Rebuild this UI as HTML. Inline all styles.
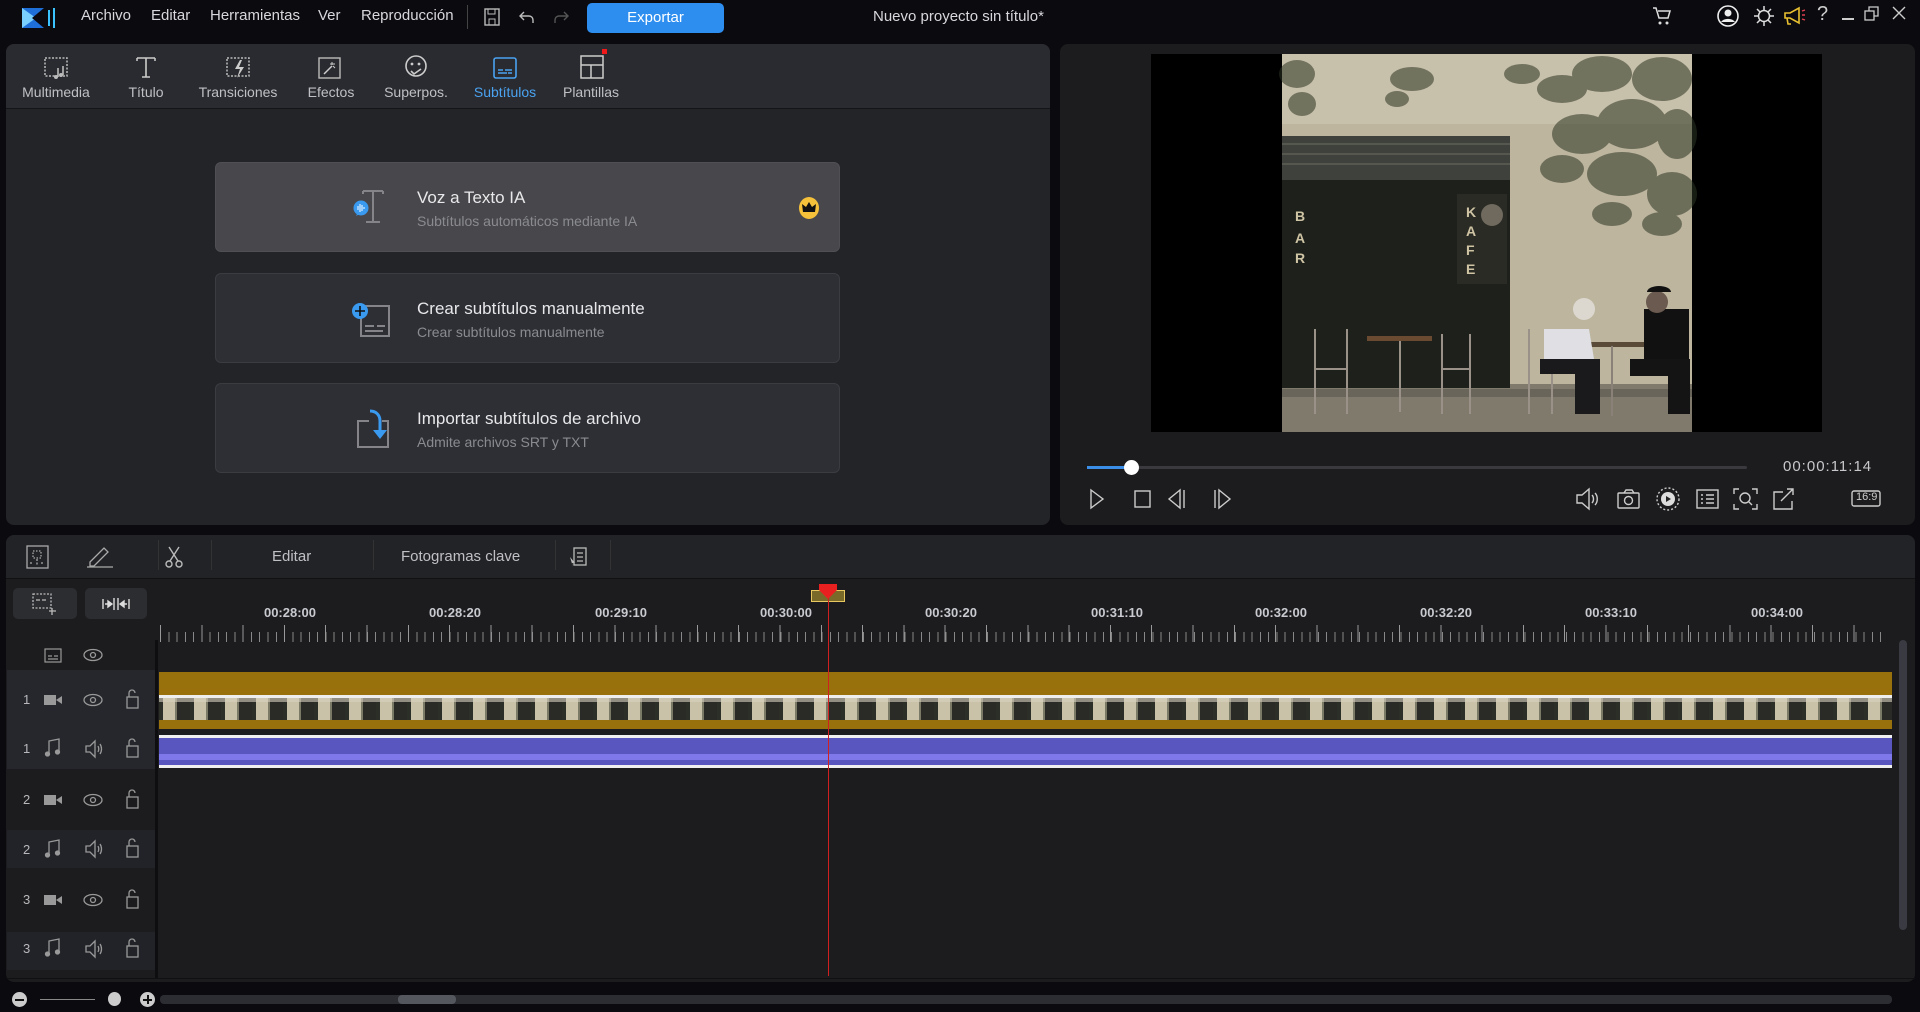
<!DOCTYPE html>
<html><head><meta charset="utf-8">
<style>
*{margin:0;padding:0;box-sizing:border-box}
body{width:1920px;height:1012px;background:#0b0a0f;font-family:"Liberation Sans",sans-serif;color:#d0d0d4;position:relative;overflow:hidden}
.a{position:absolute}
.menu{font-size:15px;color:#d8d8dc;top:7px}
.tb{font-size:14px;color:#bfc0c4;text-align:center;width:80px}
.card{position:absolute;left:215px;width:625px;height:90px;border-radius:6px;background:#2d2f35;border:1px solid #3a3c42}
.card .t{position:absolute;left:201px;top:25px;font-size:17px;color:#e8e8ea}
.card .s{position:absolute;left:201px;top:50px;font-size:14px;color:#8a8b90}
.lbl{position:absolute;top:605px;font-size:13px;font-weight:bold;color:#c8cad0;width:80px;text-align:center}
.num{position:absolute;left:23px;font-size:13px;color:#b8b8bc}
svg{position:absolute;overflow:visible}
</style></head><body>

<svg style="left:22px;top:6px" width="38" height="24" viewBox="0 0 38 24"><path d="M0 2h22v20H0z" fill="#1e6fd8"/><path d="M0 2l14 10L0 22z" fill="#7ad0ff"/><path d="M22 2L10 12l12 10z" fill="#0b0a0f"/><rect x="26" y="4" width="2" height="16" fill="#3bc3ff"/><rect x="31" y="2" width="2" height="20" fill="#3bc3ff"/></svg>
<div class="a menu" style="left:81px">Archivo</div>
<div class="a menu" style="left:151px">Editar</div>
<div class="a menu" style="left:210px">Herramientas</div>
<div class="a menu" style="left:318px">Ver</div>
<div class="a menu" style="left:361px">Reproducción</div>
<div class="a" style="left:467px;top:5px;width:1px;height:24px;background:#444"></div>
<svg style="left:484px;top:8px" width="16" height="18"><rect x="1" y="1" width="14" height="16" fill="none" stroke="#bbb" stroke-width="1.4"/><rect x="4" y="1" width="7" height="5" fill="none" stroke="#bbb"/><rect x="5" y="11" width="6" height="6" fill="none" stroke="#bbb"/></svg>
<svg style="left:518px;top:10px" width="18" height="14"><path d="M6 2L2 6l4 4M2 6h9a4 4 0 0 1 4 4v3" fill="none" stroke="#bbb" stroke-width="1.4"/></svg>
<svg style="left:552px;top:10px" width="18" height="14"><path d="M12 2l4 4-4 4M16 6H7a4 4 0 0 0-4 4v3" fill="none" stroke="#555" stroke-width="1.4"/></svg>
<div class="a" style="left:587px;top:3px;width:137px;height:30px;background:#2e8ef0;border-radius:5px;color:#fff;font-size:15px;text-align:center;line-height:30px">Exportar</div>
<div class="a" style="left:873px;top:8px;font-size:15px;color:#d8d8dc">Nuevo proyecto sin título*</div>
<svg style="left:1652px;top:6px" width="20" height="20"><path d="M1 2h3l3 10h9l2-7H6" fill="none" stroke="#ddd" stroke-width="1.5"/><circle cx="8" cy="17" r="1.5" fill="#ddd"/><circle cx="15" cy="17" r="1.5" fill="#ddd"/></svg>
<svg style="left:1717px;top:5px" width="22" height="22"><circle cx="11" cy="11" r="10" fill="none" stroke="#eee" stroke-width="1.6"/><circle cx="11" cy="8" r="3.5" fill="#eee"/><path d="M4 17a8 6 0 0 1 14 0z" fill="#eee"/></svg>
<svg style="left:1753px;top:5px" width="22" height="22"><circle cx="11" cy="11" r="5.5" fill="none" stroke="#ddd" stroke-width="1.5"/><path d="M11 1v4M11 17v4M1 11h4M17 11h4M4 4l3 3M15 15l3 3M4 18l3-3M15 7l3-3" stroke="#ddd" stroke-width="1.5"/></svg>
<svg style="left:1783px;top:6px" width="24" height="20"><path d="M2 7h5l9-5v15l-9-5H2z" fill="none" stroke="#e8c030" stroke-width="1.6"/><path d="M4 12l1 6h3" fill="none" stroke="#e8c030" stroke-width="1.6"/><path d="M19 5l3-1M19 9h3M19 13l3 1" stroke="#e04050" stroke-width="1.4"/></svg>
<div class="a" style="left:1817px;top:3px;font-size:20px;color:#ccc">?</div>
<div class="a" style="left:1842px;top:18px;width:12px;height:1.5px;background:#ccc"></div>
<svg style="left:1864px;top:6px" width="16" height="16"><rect x="1" y="5" width="9" height="9" fill="none" stroke="#ccc" stroke-width="1.3"/><path d="M5 5V1h9v9h-4" fill="none" stroke="#ccc" stroke-width="1.3"/></svg>
<svg style="left:1892px;top:6px" width="14" height="14"><path d="M1 1l12 12M13 1L1 13" stroke="#ccc" stroke-width="1.4"/></svg>

<div class="a" style="left:6px;top:44px;width:1044px;height:481px;background:#232428;border-radius:8px;overflow:hidden">
 <div class="a" style="left:0;top:0;width:1044px;height:65px;background:#2a2b30;border-bottom:1px solid #151518"></div>
</div>
<svg style="left:44px;top:56px" width="26" height="24"><rect x="1" y="2" width="22" height="18" fill="none" stroke="#bbb" stroke-width="1.5" stroke-dasharray="2 1.5"/><path d="M14 12v9" stroke="#bbb" stroke-width="1.6"/><circle cx="12" cy="21" r="2" fill="#bbb"/><path d="M19 10v9" stroke="#bbb" stroke-width="1.6"/><circle cx="17" cy="19" r="2" fill="#bbb"/></svg>
<svg style="left:135px;top:56px" width="22" height="22"><path d="M2 2h18M11 2v19M7 21h8" stroke="#ccc" stroke-width="1.6" fill="none"/><path d="M2 2v3M20 2v3" stroke="#ccc" stroke-width="1.5"/></svg>
<svg style="left:226px;top:56px" width="26" height="24"><rect x="1" y="2" width="22" height="18" fill="none" stroke="#bbb" stroke-width="1.5" stroke-dasharray="2 1.5"/><path d="M14 4l-5 9h5l-3 9 7-11h-5l3-7z" fill="#ccc"/></svg>
<svg style="left:318px;top:56px" width="24" height="24"><rect x="1" y="2" width="21" height="20" fill="none" stroke="#bbb" stroke-width="1.4"/><path d="M6 18l8-8" stroke="#ccc" stroke-width="1.5"/><path d="M14 6v3M12 8h5M15 10l2 2" stroke="#ccc" stroke-width="1"/></svg>
<svg style="left:404px;top:55px" width="24" height="26"><circle cx="12" cy="11" r="10" fill="none" stroke="#ccc" stroke-width="1.6"/><circle cx="8" cy="9" r="1.4" fill="#ccc"/><circle cx="15" cy="9" r="1.4" fill="#ccc"/><path d="M7 16l3 3 7-5" stroke="#ccc" stroke-width="1.6" fill="none"/></svg>
<svg style="left:493px;top:57px" width="24" height="22"><rect x="1" y="1" width="22" height="20" rx="2" fill="none" stroke="#4aa2f0" stroke-width="1.6"/><path d="M5 13h5M12 13h7M5 16h9M15 16h4" stroke="#4aa2f0" stroke-width="1.5"/></svg>
<svg style="left:580px;top:55px" width="24" height="24"><rect x="1" y="1" width="22" height="22" fill="none" stroke="#ccc" stroke-width="1.5"/><path d="M1 10h22M11 10v13" stroke="#ccc" stroke-width="1.5"/></svg>
<div class="a" style="left:602px;top:49px;width:5px;height:5px;background:#f01818"></div>
<div class="a tb" style="left:16px;top:84px">Multimedia</div>
<div class="a tb" style="left:106px;top:84px">Título</div>
<div class="a tb" style="left:198px;top:84px">Transiciones</div>
<div class="a tb" style="left:291px;top:84px">Efectos</div>
<div class="a tb" style="left:376px;top:84px">Superpos.</div>
<div class="a tb" style="left:465px;top:84px;color:#4aa2f0">Subtítulos</div>
<div class="a tb" style="left:551px;top:84px">Plantillas</div>

<div class="card" style="top:162px;background:#48484c;border-color:#505054">
 <svg style="left:137px;top:26px" width="40" height="36"><path d="M10 2h20M20 2v31M13 33h14M10 2v3M30 2v3" stroke="#858589" stroke-width="2" fill="none"/><circle cx="8" cy="19" r="7.5" fill="#3a9af0"/><path d="M3 27l2-4 3 1z" fill="#3a9af0"/><path d="M5 17v4M7 15v8M9 16v6M11 18v2" stroke="#fff" stroke-width="1"/></svg>
 <div class="t">Voz a Texto IA</div><div class="s">Subtítulos automáticos mediante IA</div>
 <svg style="left:582px;top:33px" width="22" height="24"><ellipse cx="11" cy="12" rx="10" ry="11" fill="#f5c13a"/><path d="M5 16l-1-8 4 3 3-5 3 5 4-3-1 8z" fill="#111"/></svg>
</div>
<div class="card" style="top:273px">
 <svg style="left:135px;top:27px" width="40" height="38"><rect x="10" y="5" width="28" height="30" fill="none" stroke="#858589" stroke-width="2"/><path d="M14 25h9M26 25h8M14 30h18" stroke="#858589" stroke-width="2"/><circle cx="9" cy="10" r="8" fill="#3a9af0"/><path d="M9 5v10M4 10h10" stroke="#111" stroke-width="1.6"/></svg>
 <div class="t">Crear subtítulos manualmente</div><div class="s">Crear subtítulos manualmente</div>
</div>
<div class="card" style="top:383px">
 <svg style="left:140px;top:24px" width="40" height="40"><path d="M13 13H2v26h30V13h-6" stroke="#858589" stroke-width="2" fill="none"/><path d="M14 3c6 0 10 4 10 10v12" stroke="#3a9af0" stroke-width="3" fill="none"/><path d="M17 22l7 9 7-9z" fill="#3a9af0"/></svg>
 <div class="t">Importar subtítulos de archivo</div><div class="s">Admite archivos SRT y TXT</div>
</div>

<div class="a" style="left:1060px;top:44px;width:855px;height:481px;background:#1c1c1e;border-radius:8px"></div>
<div class="a" style="left:1151px;top:54px;width:671px;height:378px;background:#000"></div>
<svg style="left:1282px;top:54px" width="410" height="378" viewBox="0 0 410 378">
 <rect width="410" height="378" fill="#bdb59e"/>
 <rect y="0" width="410" height="70" fill="#c7c0aa"/>
 <rect y="330" width="410" height="48" fill="#807a6c"/>
 <rect y="335" width="410" height="8" fill="#6a655a"/>
 <rect x="0" y="82" width="228" height="44" fill="#3f413c"/>
 <path d="M0 90h228M0 100h228M0 110h228" stroke="#56584f" stroke-width="2"/>
 <rect x="0" y="126" width="228" height="208" fill="#1e201b"/>
 <rect x="175" y="140" width="50" height="90" fill="#2a2b25"/>
 <g fill="#cfc4a4" font-family="Liberation Sans" font-weight="bold" font-size="14"><text x="13" y="167">B</text><text x="13" y="189">A</text><text x="13" y="209">R</text><text x="184" y="163">K</text><text x="184" y="182">A</text><text x="184" y="201">F</text><text x="184" y="220">E</text></g>
 <circle cx="210" cy="161" r="11" fill="#706a5e"/>
 <g stroke="#9a9288" stroke-width="2" fill="none"><path d="M33 275v85M65 275v85M33 315h32M90 283h58M118 283v75M160 280v80M188 280v80M160 315h28M247 275v85M270 315v45"/></g>
 <rect x="85" y="282" width="65" height="5" fill="#6a4a30"/>
 <rect x="305" y="288" width="70" height="5" fill="#5a4a38"/>
 <path d="M330 292v70" stroke="#8a8278" stroke-width="2"/>
 <path d="M262 275h45l5 30h-50z" fill="#e0e0e4"/>
 <circle cx="302" cy="255" r="11" fill="#dcd8d0"/>
 <path d="M258 305h60v55h-25v-40h-35z" fill="#1a1a1c"/>
 <path d="M362 255h45v60h-45z" fill="#111"/>
 <circle cx="375" cy="248" r="11" fill="#6a5a50"/>
 <path d="M365 238a12 6 0 0 1 24 0z" fill="#111"/>
 <path d="M348 305h60v55h-22v-38h-38z" fill="#141414"/>
 <g fill="#2d3523" opacity=".55">
  <ellipse cx="15" cy="20" rx="18" ry="14"/><ellipse cx="20" cy="50" rx="14" ry="12"/><ellipse cx="130" cy="25" rx="22" ry="12"/><ellipse cx="115" cy="45" rx="12" ry="8"/>
  <ellipse cx="240" cy="20" rx="18" ry="10"/><ellipse cx="280" cy="35" rx="25" ry="14"/><ellipse cx="320" cy="20" rx="30" ry="18"/><ellipse cx="380" cy="25" rx="30" ry="22"/>
  <ellipse cx="300" cy="80" rx="30" ry="20"/><ellipse cx="350" cy="70" rx="35" ry="25"/><ellipse cx="395" cy="80" rx="20" ry="25"/>
  <ellipse cx="280" cy="115" rx="22" ry="14"/><ellipse cx="340" cy="120" rx="35" ry="22"/><ellipse cx="390" cy="140" rx="25" ry="22"/><ellipse cx="330" cy="160" rx="20" ry="12"/><ellipse cx="380" cy="170" rx="20" ry="12"/>
 </g>
</svg>
<div class="a" style="left:1087px;top:466px;width:660px;height:3px;background:#3a3a3e;border-radius:2px"></div>
<div class="a" style="left:1087px;top:466px;width:44px;height:3px;background:#3a8ee8"></div>
<div class="a" style="left:1124px;top:460px;width:15px;height:15px;border-radius:50%;background:#fff"></div>
<div class="a" style="left:1783px;top:458px;font-size:15px;color:#c8c8cc;letter-spacing:1px">00:00:11:14</div>
<svg style="left:1090px;top:488px" width="150" height="22" fill="none" stroke="#ccc" stroke-width="1.4">
 <path d="M1 2l12 9-12 9z"/><rect x="45" y="3" width="15" height="16"/><path d="M90 2L79 11l11 9zM94 2v18M125 2v18M129 2l11 9-11 9z"/></svg>
<svg style="left:1575px;top:486px" width="305" height="26" fill="none" stroke="#ccc" stroke-width="1.4">
 <path d="M2 9h5l7-6v20l-7-6H2zM17 9c2 2 2 6 0 8M20 7c3 3 3 9 0 12"/>
 <rect x="43" y="7" width="21" height="15" rx="1"/><path d="M49 7l2-3h6l2 3"/><circle cx="53.5" cy="14.5" r="4"/>
 <circle cx="93" cy="13" r="7" fill="#ddd" stroke="none"/><path d="M91 10l5 3-5 3z" fill="#222" stroke="none"/><circle cx="93" cy="13" r="11" stroke-dasharray="2 2"/>
 <rect x="122" y="4" width="21" height="18"/><path d="M126 9h2M131 9h8M126 13h2M131 13h8M126 17h2M131 17h8"/>
 <path d="M164 3h-5v5M177 3h5v5M164 23h-5v-5M177 23h5v-5"/><circle cx="170" cy="12" r="5"/><path d="M174 16l3 3"/>
 <path d="M208 6h-9v17h18v-8M206 15l12-12M212 3h6v6"/>
 <rect x="277" y="5" width="28" height="15" rx="2"/>
</svg>
<div class="a" style="left:1856px;top:491px;font-size:11px;color:#ccc">16:9</div>

<div class="a" style="left:6px;top:535px;width:1909px;height:447px;background:#1c1c1e;border-radius:8px"></div>
<div class="a" style="left:6px;top:535px;width:1909px;height:44px;background:#222326;border-radius:8px 8px 0 0;border-bottom:1px solid #111"></div>
<svg style="left:26px;top:545px" width="24" height="24" fill="none" stroke="#aaa" stroke-width="1.3"><rect x="1" y="1" width="21" height="22"/><rect x="7" y="6" width="8" height="7" stroke-dasharray="1.5 1.5"/><path d="M11 14v6M4 18h3M15 18h3" stroke-dasharray="2 1.5"/></svg>
<svg style="left:86px;top:546px" width="28" height="22" fill="none" stroke="#aaa" stroke-width="1.3"><path d="M4 16L18 2l4 4L8 20H4zM1 21h26"/></svg>
<svg style="left:165px;top:546px" width="18" height="22" fill="none" stroke="#bbb" stroke-width="1.4"><path d="M4 1l9 14M14 1L5 15"/><circle cx="4" cy="18" r="3"/><circle cx="14" cy="18" r="3"/></svg>
<div class="a" style="left:272px;top:548px;font-size:15px;color:#c0c0c4">Editar</div>
<div class="a" style="left:401px;top:548px;font-size:15px;color:#c0c0c4">Fotogramas clave</div>
<svg style="left:569px;top:547px" width="22" height="22" fill="none" stroke="#bbb" stroke-width="1.3"><rect x="5" y="1" width="12" height="17"/><path d="M8 6h6M8 10h6M8 14h6"/><path d="M1 10l5 6-3 0 1 4z" fill="#bbb" stroke="none"/></svg>
<div class="a" style="left:158px;top:540px;width:1px;height:30px;background:#333"></div>
<div class="a" style="left:211px;top:540px;width:1px;height:30px;background:#333"></div>
<div class="a" style="left:373px;top:540px;width:1px;height:30px;background:#333"></div>
<div class="a" style="left:555px;top:540px;width:1px;height:30px;background:#333"></div>
<div class="a" style="left:610px;top:540px;width:1px;height:30px;background:#333"></div>

<div class="a" style="left:13px;top:588px;width:64px;height:31px;background:#2c2d31;border-radius:5px"></div>
<div class="a" style="left:85px;top:588px;width:62px;height:31px;background:#2c2d31;border-radius:5px"></div>
<svg style="left:32px;top:593px" width="28" height="22" fill="none" stroke="#bbb" stroke-width="1.3"><rect x="1" y="1" width="18" height="14" stroke-dasharray="2 1.5"/><path d="M4 7h4M10 7h4M20 15v7M17 18h7"/></svg>
<svg style="left:102px;top:597px" width="28" height="14" stroke="#ddd" stroke-width="1.4" fill="#ddd"><path d="M1 2v10M27 2v10M12 1v12M16 1v12M3 7h7M18 7h7" fill="none"/><path d="M10 7l-4-3v6zM18 7l4-3v6z"/></svg>

<div class="a" style="left:7px;top:670px;width:149px;height:99px;background:#26272c"></div>
<div class="a" style="left:7px;top:830px;width:149px;height:38px;background:#222328"></div>
<div class="a" style="left:7px;top:932px;width:149px;height:38px;background:#222328"></div>
<div class="a" style="left:155px;top:640px;width:3px;height:338px;background:#0e0e10"></div>
<div class="a" style="left:7px;top:978px;width:1908px;height:1px;background:#101012"></div>

<svg style="left:44px;top:648px" width="18" height="15" fill="none" stroke="#999" stroke-width="1.2"><rect x="1" y="1" width="16" height="13"/><path d="M4 8h4M10 8h4M4 11h10"/></svg>
<div class="num" style="top:692px">1</div><div class="num" style="top:741px">1</div>
<div class="num" style="top:792px">2</div><div class="num" style="top:842px">2</div>
<div class="num" style="top:892px">3</div><div class="num" style="top:941px">3</div>

<svg style="left:0;top:0" width="160" height="980" fill="none" stroke="#999" stroke-width="1.3">
 <g><ellipse cx="93" cy="655" rx="9" ry="5.5"/><circle cx="93" cy="655" r="2.5"/></g>
 <g><ellipse cx="93" cy="700" rx="9" ry="5.5"/><circle cx="93" cy="700" r="2.5"/></g>
 <g><ellipse cx="93" cy="800" rx="9" ry="5.5"/><circle cx="93" cy="800" r="2.5"/></g>
 <g><ellipse cx="93" cy="900" rx="9" ry="5.5"/><circle cx="93" cy="900" r="2.5"/></g>
 <g fill="#999" stroke="none"><rect x="44" y="695" width="12" height="10"/><path d="M56 700l6-4v8z"/>
 <rect x="44" y="795" width="12" height="10"/><path d="M56 800l6-4v8z"/>
 <rect x="44" y="895" width="12" height="10"/><path d="M56 900l6-4v8z"/></g>
 <g><path d="M49 754v-13l10-2v13" /><circle cx="47.5" cy="754" r="2" fill="#999"/><circle cx="57.5" cy="752" r="2" fill="#999"/></g>
 <g><path d="M49 855v-13l10-2v13" /><circle cx="47.5" cy="855" r="2" fill="#999"/><circle cx="57.5" cy="853" r="2" fill="#999"/></g>
 <g><path d="M49 954v-13l10-2v13" /><circle cx="47.5" cy="954" r="2" fill="#999"/><circle cx="57.5" cy="952" r="2" fill="#999"/></g>
 <g><path d="M86 746h4l5-5v16l-5-5h-4zM98 746c1 2 1 4 0 6M100 744c2 3 2 7 0 10"/></g>
 <g><path d="M86 846h4l5-5v16l-5-5h-4zM98 846c1 2 1 4 0 6M100 844c2 3 2 7 0 10"/></g>
 <g><path d="M86 946h4l5-5v16l-5-5h-4zM98 946c1 2 1 4 0 6M100 944c2 3 2 7 0 10"/></g>
 <g><rect x="127" y="697" width="11" height="11"/><path d="M129 697v-4a3 3 0 0 1 6 0"/></g>
 <g><rect x="127" y="746" width="11" height="11"/><path d="M129 746v-4a3 3 0 0 1 6 0"/></g>
 <g><rect x="127" y="797" width="11" height="11"/><path d="M129 797v-4a3 3 0 0 1 6 0"/></g>
 <g><rect x="127" y="846" width="11" height="11"/><path d="M129 846v-4a3 3 0 0 1 6 0"/></g>
 <g><rect x="127" y="897" width="11" height="11"/><path d="M129 897v-4a3 3 0 0 1 6 0"/></g>
 <g><rect x="127" y="946" width="11" height="11"/><path d="M129 946v-4a3 3 0 0 1 6 0"/></g>
</svg>

<div class="lbl" style="left:250px">00:28:00</div>
<div class="lbl" style="left:415px">00:28:20</div>
<div class="lbl" style="left:581px">00:29:10</div>
<div class="lbl" style="left:746px">00:30:00</div>
<div class="lbl" style="left:911px">00:30:20</div>
<div class="lbl" style="left:1077px">00:31:10</div>
<div class="lbl" style="left:1241px">00:32:00</div>
<div class="lbl" style="left:1406px">00:32:20</div>
<div class="lbl" style="left:1571px">00:33:10</div>
<div class="lbl" style="left:1737px">00:34:00</div>
<div class="a" style="left:160px;top:632px;width:1728px;height:10px;background:repeating-linear-gradient(90deg,#888 0 1px,transparent 1px 8.27px)"></div>
<div class="a" style="left:160px;top:625px;width:1728px;height:17px;background:repeating-linear-gradient(90deg,#999 0 1px,transparent 1px 41.3px)"></div>

<div class="a" style="left:159px;top:672px;width:1733px;height:57px;background:#98700c"></div>
<div class="a" style="left:159px;top:695px;width:1733px;height:3px;background:#eee"></div>
<div class="a" style="left:159px;top:698px;width:1733px;height:22px;background:repeating-linear-gradient(90deg,#2c2e28 0 4px,#c9c2a8 4px 16px,#7a7a66 16px 18px,#2a2b26 18px 31px)"></div>
<div class="a" style="left:159px;top:698px;width:1733px;height:4px;background:#d8d2c0;opacity:.6"></div>
<div class="a" style="left:159px;top:735px;width:1733px;height:3px;background:#f0f0f0"></div>
<div class="a" style="left:159px;top:738px;width:1733px;height:27px;background:#5a56c0"></div>
<div class="a" style="left:159px;top:754px;width:1733px;height:6px;background:#7e78ea"></div>
<div class="a" style="left:159px;top:765px;width:1733px;height:3px;background:#f0f0f0"></div>

<div class="a" style="left:811px;top:590px;width:34px;height:12px;background:#7a6a2a;border:1px solid #e8c860"></div>
<svg style="left:819px;top:584px" width="18" height="16"><path d="M0 0h18v6l-9 9-9-9z" fill="#e82020"/></svg>
<div class="a" style="left:828px;top:598px;width:1px;height:378px;background:#d02020"></div>

<div class="a" style="left:1899px;top:640px;width:8px;height:290px;background:#3a3b42;border-radius:4px"></div>

<div class="a" style="left:12px;top:992px;width:15px;height:15px;border-radius:50%;background:#ccc"></div>
<div class="a" style="left:15px;top:999px;width:9px;height:2px;background:#111"></div>
<div class="a" style="left:40px;top:999px;width:55px;height:1px;background:#888"></div>
<div class="a" style="left:108px;top:992px;width:13px;height:14px;border-radius:50%;background:#ccc"></div>
<div class="a" style="left:140px;top:992px;width:15px;height:15px;border-radius:50%;background:#ccc"></div>
<div class="a" style="left:143px;top:999px;width:9px;height:2px;background:#111"></div>
<div class="a" style="left:146.5px;top:995px;width:2px;height:9px;background:#111"></div>
<div class="a" style="left:160px;top:995px;width:1732px;height:9px;background:#2c2d33;border-radius:4px"></div>
<div class="a" style="left:398px;top:995px;width:58px;height:9px;background:#55575f;border-radius:4px"></div>
</body></html>
